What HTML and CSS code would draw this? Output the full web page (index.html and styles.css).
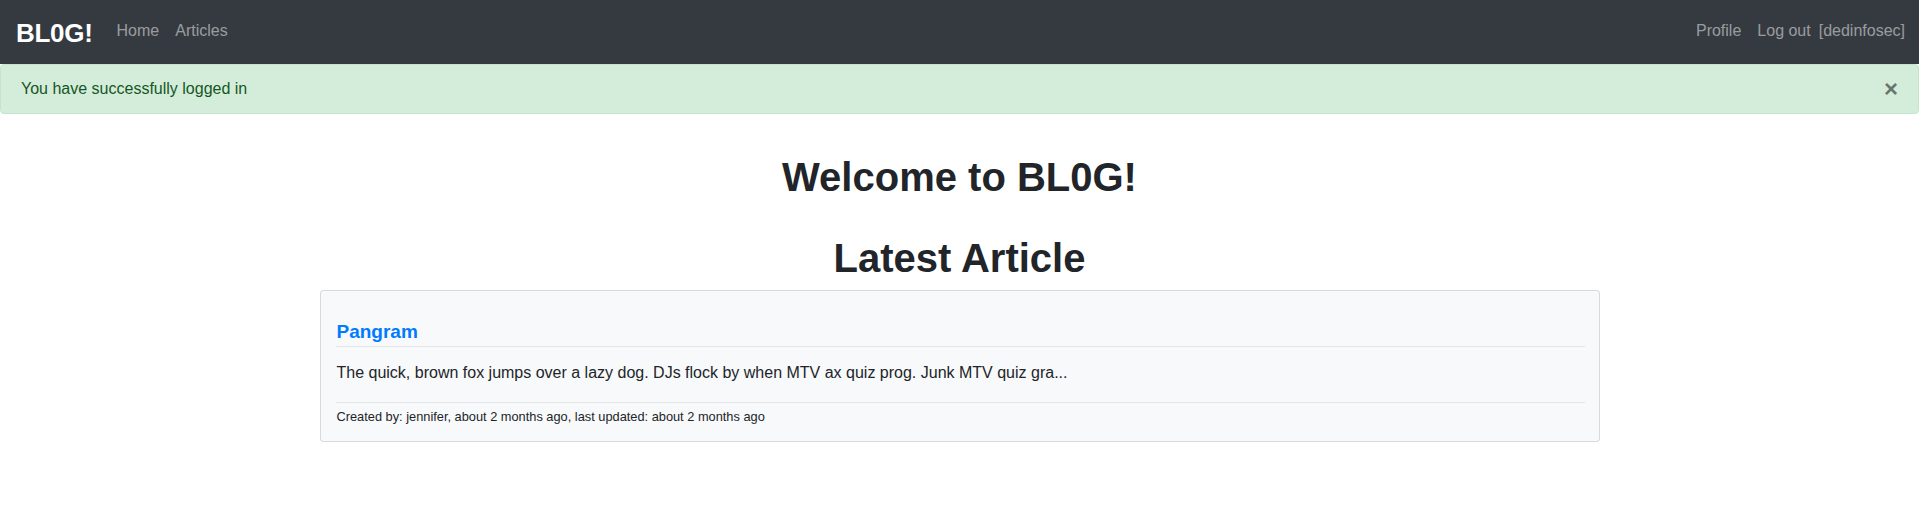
FILE: index.html
```html
<!DOCTYPE html>
<html lang="en">
<head>
<meta charset="utf-8">
<title>BL0G!</title>
<link rel="stylesheet" href="styles.css">
</head>
<body>
<nav class="navbar">
  <div class="nav-left">
    <a class="brand" href="#">BL0G!</a>
    <a class="nav-link" href="#">Home</a>
    <a class="nav-link" href="#">Articles</a>
  </div>
  <div class="nav-right">
    <a class="nav-link" href="#">Profile</a>
    <a class="nav-link" href="#">Log out</a>
    <span class="nav-text">[dedinfosec]</span>
  </div>
</nav>
<div class="alert">
  <span>You have successfully logged in</span>
  <button class="close" type="button">&times;</button>
</div>
<main class="main">
  <h1 class="title">Welcome to BL0G!</h1>
  <h1 class="title second">Latest Article</h1>
  <div class="card">
    <h5 class="card-title"><a href="#">Pangram</a></h5>
    <hr class="rule">
    <p class="card-text">The quick, brown fox jumps over a lazy dog. DJs flock by when MTV ax quiz prog. Junk MTV quiz gra...</p>
    <hr class="rule">
    <small class="meta">Created by: jennifer, about 2 months ago, last updated: about 2 months ago</small>
  </div>
</main>
</body>
</html>
```
FILE: styles.css
```css
* { box-sizing: border-box; }
html, body { margin: 0; padding: 0; }
body {
  font-family: "Liberation Sans", Arial, sans-serif;
  font-size: 16px;
  line-height: 1.5;
  color: #212529;
  background: #fff;
}
a { text-decoration: none; }

.navbar {
  height: 64px;
  background: #343a40;
  display: flex;
  align-items: center;
  justify-content: space-between;
  padding: 0 14px 0 16px;
}
.nav-left, .nav-right { display: flex; align-items: center; }
.brand {
  color: #fff;
  font-weight: bold;
  font-size: 26px;
  letter-spacing: -0.3px;
  line-height: 1;
  margin-right: 16px;
  padding-top: 2px;
}
.nav-link {
  color: rgba(255,255,255,.5);
  padding: 0 8px;
  line-height: 24px;
  margin-bottom: 2px;
}
.nav-right .nav-link:first-child { padding-left: 0; }
.nav-text { color: rgba(255,255,255,.5); line-height: 24px; margin-bottom: 2px; }

.alert {
  position: relative;
  background: #d4edda;
  border: 1px solid #c3e6cb;
  border-radius: 4px;
  color: #155724;
  padding: 12px 20px;
  line-height: 24px;
}
.close {
  position: absolute;
  top: 0;
  right: 0;
  padding: 12px 20px;
  background: transparent;
  border: 0;
  font-family: "Liberation Sans", Arial, sans-serif;
  font-size: 24px;
  font-weight: bold;
  line-height: 24px;
  color: #000;
  opacity: .5;
  cursor: pointer;
}

.main {
  width: 1280px;
  margin: 0 auto;
  display: flex;
  flex-direction: column;
}
.title {
  text-align: center;
  font-size: 40px;
  font-weight: bold;
  line-height: 48px;
  margin: 39px 0 8px;
}
.title.second { margin-top: 25px; }

.card {
  background: #f8f9fa;
  border: 1px solid rgba(0,0,0,.125);
  border-radius: 4px;
  padding: 29px 14px 15px 15px;
  display: flex;
  flex-direction: column;
}
.card-title {
  margin: 0 0 0 1px;
  font-size: 19px;
  line-height: 24px;
  font-weight: bold;
}
.card-title a { color: #007bff; }
.rule {
  margin: 2px 0 0;
  border: 0;
  border-top: 1px solid rgba(0,0,0,.08);
  height: 0;
}
.card-text {
  margin: 14px 0 15px 1px;
  line-height: 24px;
}
.meta {
  margin: 4px 0 0 1px;
  font-size: 12.8px;
  line-height: 19px;
}
```
